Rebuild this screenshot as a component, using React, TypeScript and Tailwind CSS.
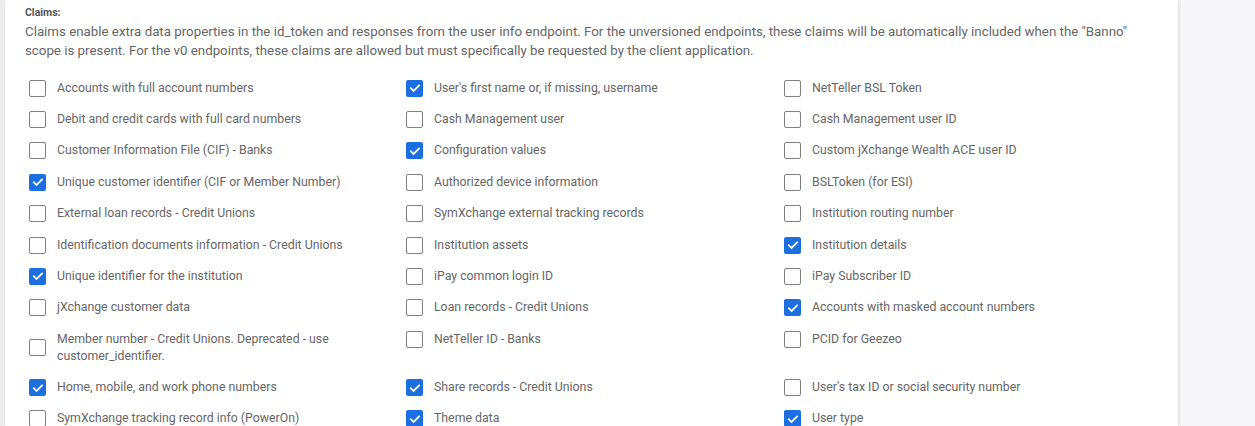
import React from "react";

type Item = { label: React.ReactNode; checked: boolean };

const items: Item[] = [
  { label: "Accounts with full account numbers", checked: false },
  { label: "User's first name or, if missing, username", checked: true },
  { label: "NetTeller BSL Token", checked: false },
  { label: "Debit and credit cards with full card numbers", checked: false },
  { label: "Cash Management user", checked: false },
  { label: "Cash Management user ID", checked: false },
  { label: "Customer Information File (CIF) - Banks", checked: false },
  { label: "Configuration values", checked: true },
  { label: "Custom jXchange Wealth ACE user ID", checked: false },
  { label: "Unique customer identifier (CIF or Member Number)", checked: true },
  { label: "Authorized device information", checked: false },
  { label: "BSLToken (for ESI)", checked: false },
  { label: "External loan records - Credit Unions", checked: false },
  { label: "SymXchange external tracking records", checked: false },
  { label: "Institution routing number", checked: false },
  { label: "Identification documents information - Credit Unions", checked: false },
  { label: "Institution assets", checked: false },
  { label: "Institution details", checked: true },
  { label: "Unique identifier for the institution", checked: true },
  { label: "iPay common login ID", checked: false },
  { label: "iPay Subscriber ID", checked: false },
  { label: "jXchange customer data", checked: false },
  { label: "Loan records - Credit Unions", checked: false },
  { label: "Accounts with masked account numbers", checked: true },
  {
    label: (
      <>
        Member number - Credit Unions. Deprecated - use
        <br />
        customer_identifier.
      </>
    ),
    checked: false,
  },
  { label: "NetTeller ID - Banks", checked: false },
  { label: "PCID for Geezeo", checked: false },
  { label: "Home, mobile, and work phone numbers", checked: true },
  { label: "Share records - Credit Unions", checked: true },
  { label: "User's tax ID or social security number", checked: false },
  { label: "SymXchange tracking record info (PowerOn)", checked: false },
  { label: "Theme data", checked: true },
  { label: "User type", checked: true },
];

function Box({ checked }: { checked: boolean }) {
  if (checked) {
    return (
      <span className="flex h-[17px] w-[17px] shrink-0 items-center justify-center rounded-[2px] bg-[#1c6fe0]">
        <svg viewBox="0 0 24 24" className="h-[14px] w-[14px]" fill="none" stroke="white" strokeWidth="3" strokeLinecap="square">
          <path d="M5 12.5l4.5 4.5L19 7.5" />
        </svg>
      </span>
    );
  }
  return <span className="h-[17px] w-[17px] shrink-0 rounded-[2px] border-[1.5px] border-[#808080] bg-white" />;
}

export default function App() {
  return (
    <div
      className="flex h-[426px] w-full overflow-hidden bg-[#f6f5f8]"
      style={{ fontFamily: "Roboto, 'Liberation Sans', sans-serif" }}
    >
      <div className="w-[5px] shrink-0 bg-[#ececec]" />
      <div className="w-[1173px] shrink-0 bg-white pl-[20px] pt-[6px] shadow-[1px_0_3px_rgba(0,0,0,0.12)]">
        <div className="text-[10.5px] font-bold leading-[14px] text-[#555]">Claims:</div>
        <p className="mt-[1.5px] whitespace-nowrap text-[13.3px] leading-[19px] text-[#666]">
          Claims enable extra data properties in the id_token and responses from the user info endpoint. For the unversioned endpoints, these claims will be automatically included when the "Banno"
          <br />
          scope is present. For the v0 endpoints, these claims are allowed but must specifically be requested by the client application.
        </p>
        <div className="mt-[13px] grid grid-cols-[377px_378px_1fr] items-start pl-[4px]">
          {items.map((it, i) => (
            <div key={i} className="flex items-center gap-[11px] py-[7.2px]">
              <Box checked={it.checked} />
              <span className="text-[12.3px] leading-[17px] text-[#666]">{it.label}</span>
            </div>
          ))}
        </div>
      </div>
    </div>
  );
}
